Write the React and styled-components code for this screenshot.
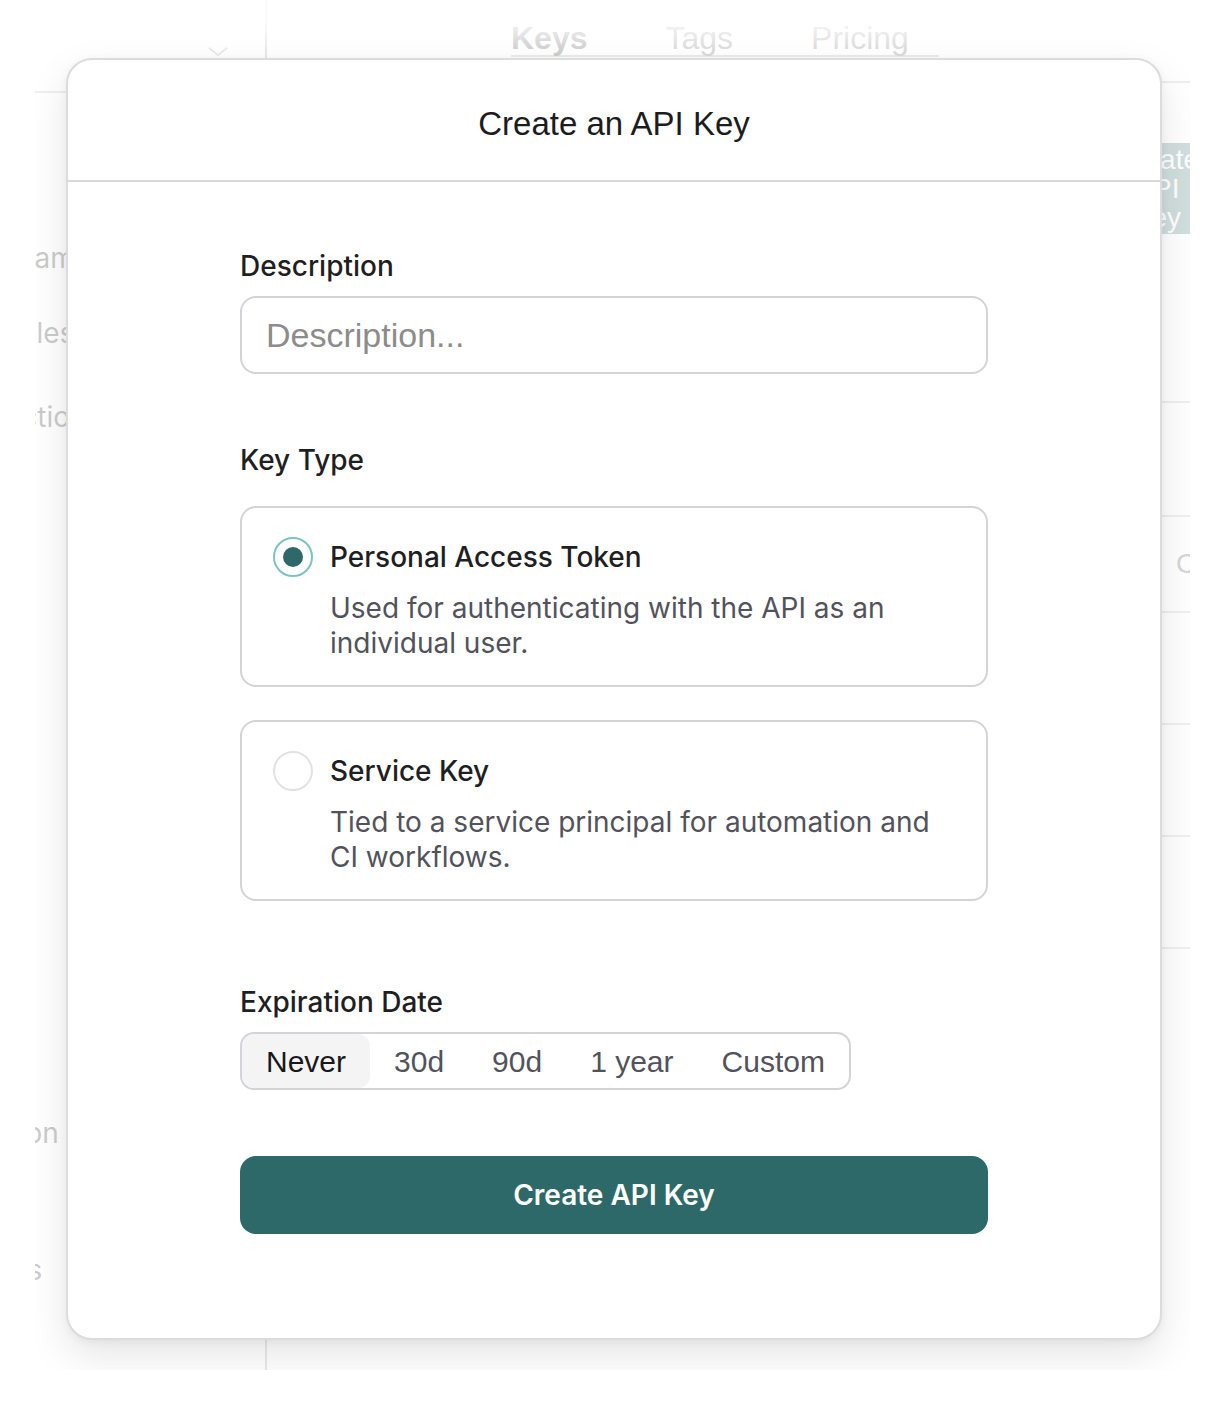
import styled, { createGlobalStyle } from "styled-components";

const GlobalStyle = createGlobalStyle`
  html, body {
    margin: 0;
    padding: 0;
    background: #ffffff;
  }
  * {
    box-sizing: border-box;
  }
`;

const sideItems = [
  { label: "Team", gap: 148 },
  { label: "Roles", gap: 41 },
  { label: "Actions", gap: 50 },
  { label: "Icon", gap: 682 },
  { label: "IPs", gap: 103 },
];

const rowHeights = [114, 114, 96, 112, 112, 112];

const keyTypes = [
  {
    id: "pat",
    title: "Personal Access Token",
    text: "Used for authenticating with the API as an individual user.",
  },
  {
    id: "service",
    title: "Service Key",
    text: "Tied to a service principal for automation and CI workflows.",
  },
];

const expiries = ["Never", "30d", "90d", "1 year", "Custom"];

export default function App() {
  const selectedType = "pat";
  const selectedExpiry = "Never";

  return (
    <>
      <GlobalStyle />
      <Frame>
        <Page>
          <Sidebar>
            <SideHeader>
              <Chevron viewBox="0 0 24 12" aria-hidden="true">
                <path d="M2 2 L12 10 L22 2" />
              </Chevron>
            </SideHeader>
            {sideItems.map((item) => (
              <NavItem key={item.label} $gap={item.gap}>
                {item.label}
              </NavItem>
            ))}
          </Sidebar>
          <MainArea>
            <TopBar>
              <Tabs>
                <Tab $active>Keys</Tab>
                <Tab>Tags</Tab>
                <Tab>Pricing</Tab>
              </Tabs>
            </TopBar>
            <Toolbar>
              <GhostButton>{"Create\nAPI\nKey"}</GhostButton>
            </Toolbar>
            <Table>
              {rowHeights.map((h, i) => (
                <Row key={i} $height={h}>
                  <span />
                  <Cell>{i === 2 ? "Copy" : ""}</Cell>
                </Row>
              ))}
            </Table>
          </MainArea>
        </Page>

        <Overlay>
          <Modal>
            <ModalHeader>
              <ModalTitle>Create an API Key</ModalTitle>
            </ModalHeader>
            <ModalBody>
              <Label>Description</Label>
              <TextInput placeholder="Description..." />

              <Label $top={69} $bottom={29}>
                Key Type
              </Label>
              <Options>
                {keyTypes.map((type) => {
                  const checked = type.id === selectedType;
                  return (
                    <OptionCard key={type.id}>
                      <Radio $checked={checked}>{checked && <RadioDot />}</Radio>
                      <OptionText>
                        <OptionTitle>{type.title}</OptionTitle>
                        <OptionDesc>{type.text}</OptionDesc>
                      </OptionText>
                    </OptionCard>
                  );
                })}
              </Options>

              <Label $top={84}>Expiration Date</Label>
              <Segmented>
                {expiries.map((e) => (
                  <Segment key={e} $active={e === selectedExpiry}>
                    {e}
                  </Segment>
                ))}
              </Segmented>

              <SubmitButton type="button">Create API Key</SubmitButton>
            </ModalBody>
          </Modal>
        </Overlay>
      </Frame>
    </>
  );
}

const Frame = styled.div`
  position: relative;
  margin-left: 35px;
  width: 1155px;
  height: 1370px;
  overflow: hidden;
  background: #ffffff;
`;

const Page = styled.div`
  display: flex;
  margin-left: -34px;
  width: 1224px;
  height: 100%;
  font-family: Inter, "Noto Sans", sans-serif;
`;

const Sidebar = styled.aside`
  width: 266px;
  flex-shrink: 0;
  border-right: 2px solid #9a9a9a;
  display: flex;
  flex-direction: column;
`;

const SideHeader = styled.div`
  height: 93px;
  border-bottom: 2px solid #b5b5b5;
  display: flex;
  justify-content: flex-end;
  align-items: flex-start;
  padding: 46px 36px 0 0;
`;

const Chevron = styled.svg`
  width: 22px;
  height: 11px;
  fill: none;
  stroke: #999;
  stroke-width: 2;
`;

const NavItem = styled.div`
  margin-top: ${(p) => p.$gap}px;
  padding-left: 1px;
  font-size: 28px;
  line-height: 34px;
  color: #111;
  white-space: nowrap;
`;

const MainArea = styled.main`
  flex: 1;
  display: flex;
  flex-direction: column;
`;

const TopBar = styled.div`
  height: 83px;
  border-bottom: 2px solid #b5b5b5;
  padding-left: 244px;
`;

const Tabs = styled.nav`
  display: inline-flex;
  gap: 78px;
  height: 57px;
  border-bottom: 2px solid #a8a8a8;
  padding-right: 30px;
  align-items: flex-start;
`;

const Tab = styled.span`
  font-family: "Liberation Sans", Arial, sans-serif;
  font-size: 32px;
  line-height: 32px;
  padding-top: 22px;
  font-weight: ${(p) => (p.$active ? 700 : 400)};
  color: ${(p) => (p.$active ? "#222" : "#555")};
`;

const Toolbar = styled.div`
  display: flex;
  justify-content: flex-end;
  padding-top: 60px;
`;

const GhostButton = styled.button`
  width: 124px;
  height: 91px;
  border: none;
  border-radius: 6px;
  background: #2e6969;
  color: #fff;
  font-family: "Liberation Sans", Arial, sans-serif;
  font-size: 28px;
  line-height: 29px;
  padding: 0 12px 0 0;
  text-align: center;
  white-space: pre-line;
`;

const Table = styled.div`
  margin-top: 55px;
`;

const Row = styled.div`
  display: grid;
  grid-template-columns: 1fr 49px;
  height: ${(p) => p.$height}px;
  border-bottom: 2px solid #b8b8b8;
  align-items: center;
`;

const Cell = styled.span`
  font-family: "Liberation Sans", Arial, sans-serif;
  font-size: 28px;
  color: #444;
  white-space: nowrap;
`;

const Overlay = styled.div`
  position: absolute;
  inset: 0;
  background: linear-gradient(
    to bottom,
    rgba(255, 255, 255, 0.95) 0px,
    rgba(255, 255, 255, 0.95) 22px,
    rgba(255, 255, 255, 0.78) 52px
  );
  padding: 58px 0 0 31px;
`;

const Modal = styled.div`
  width: 1096px;
  height: 1282px;
  background: #ffffff;
  border: 2px solid #dcdcdf;
  border-radius: 26px;
  box-shadow: 0 16px 40px rgba(0, 0, 0, 0.1), 0 2px 8px rgba(0, 0, 0, 0.05);
  display: flex;
  flex-direction: column;
`;

const ModalHeader = styled.header`
  height: 122px;
  padding-top: 8px;
  border-bottom: 2px solid #d9d9db;
  display: flex;
  align-items: center;
  justify-content: center;
  flex-shrink: 0;
`;

const ModalTitle = styled.h2`
  margin: 0;
  font-family: "Liberation Sans", Arial, sans-serif;
  font-weight: 400;
  font-size: 33px;
  color: #1c1c1e;
`;

const ModalBody = styled.div`
  padding: 67px 172px 0;
  display: flex;
  flex-direction: column;
  align-items: flex-start;
`;

const Label = styled.label`
  margin-top: ${(p) => p.$top || 0}px;
  margin-bottom: ${(p) => (p.$bottom != null ? p.$bottom : 13)}px;
  font-family: Inter, sans-serif;
  font-weight: 500;
  font-size: 28px;
  line-height: 34px;
  color: #1f1f23;
`;

const TextInput = styled.input`
  width: 100%;
  height: 78px;
  border: 2px solid #d4d4d8;
  border-radius: 16px;
  padding: 0 24px;
  font-family: "Liberation Sans", Arial, sans-serif;
  font-size: 34px;
  color: #1f1f23;
  outline: none;

  &::placeholder {
    color: #8c8c8c;
  }
`;

const Options = styled.div`
  width: 100%;
  display: flex;
  flex-direction: column;
  gap: 33px;
`;

const OptionCard = styled.div`
  display: flex;
  gap: 17px;
  border: 2px solid #d4d4d8;
  border-radius: 16px;
  padding: 29px 30px 24px 31px;
`;

const Radio = styled.span`
  flex-shrink: 0;
  width: 40px;
  height: 40px;
  border-radius: 50%;
  border: 2px solid ${(p) => (p.$checked ? "#7dc3bf" : "#e2e2e4")};
  display: flex;
  align-items: center;
  justify-content: center;
`;

const RadioDot = styled.span`
  width: 20px;
  height: 20px;
  border-radius: 50%;
  background: #2e6969;
`;

const OptionText = styled.div`
  display: flex;
  flex-direction: column;
  gap: 14px;
  font-family: Inter, sans-serif;
`;

const OptionTitle = styled.div`
  font-weight: 500;
  font-size: 28px;
  line-height: 40px;
  color: #1f1f23;
`;

const OptionDesc = styled.p`
  margin: 0;
  font-size: 28px;
  line-height: 35px;
  color: #52525b;
  max-width: 600px;
`;

const Segmented = styled.div`
  display: inline-flex;
  height: 58px;
  border: 2px solid #d4d4d8;
  border-radius: 14px;
  overflow: hidden;
`;

const Segment = styled.span`
  display: flex;
  align-items: center;
  padding: 2px 24px 0 24px;
  border-radius: 12px;
  font-family: "Liberation Sans", Arial, sans-serif;
  font-size: 30px;
  background: ${(p) => (p.$active ? "#f4f4f5" : "transparent")};
  color: ${(p) => (p.$active ? "#18181b" : "#52525b")};
`;

const SubmitButton = styled.button`
  margin-top: 66px;
  width: 100%;
  height: 78px;
  border: none;
  border-radius: 16px;
  background: #2e6969;
  color: #ffffff;
  font-family: Inter, sans-serif;
  font-weight: 600;
  font-size: 28px;
`;
